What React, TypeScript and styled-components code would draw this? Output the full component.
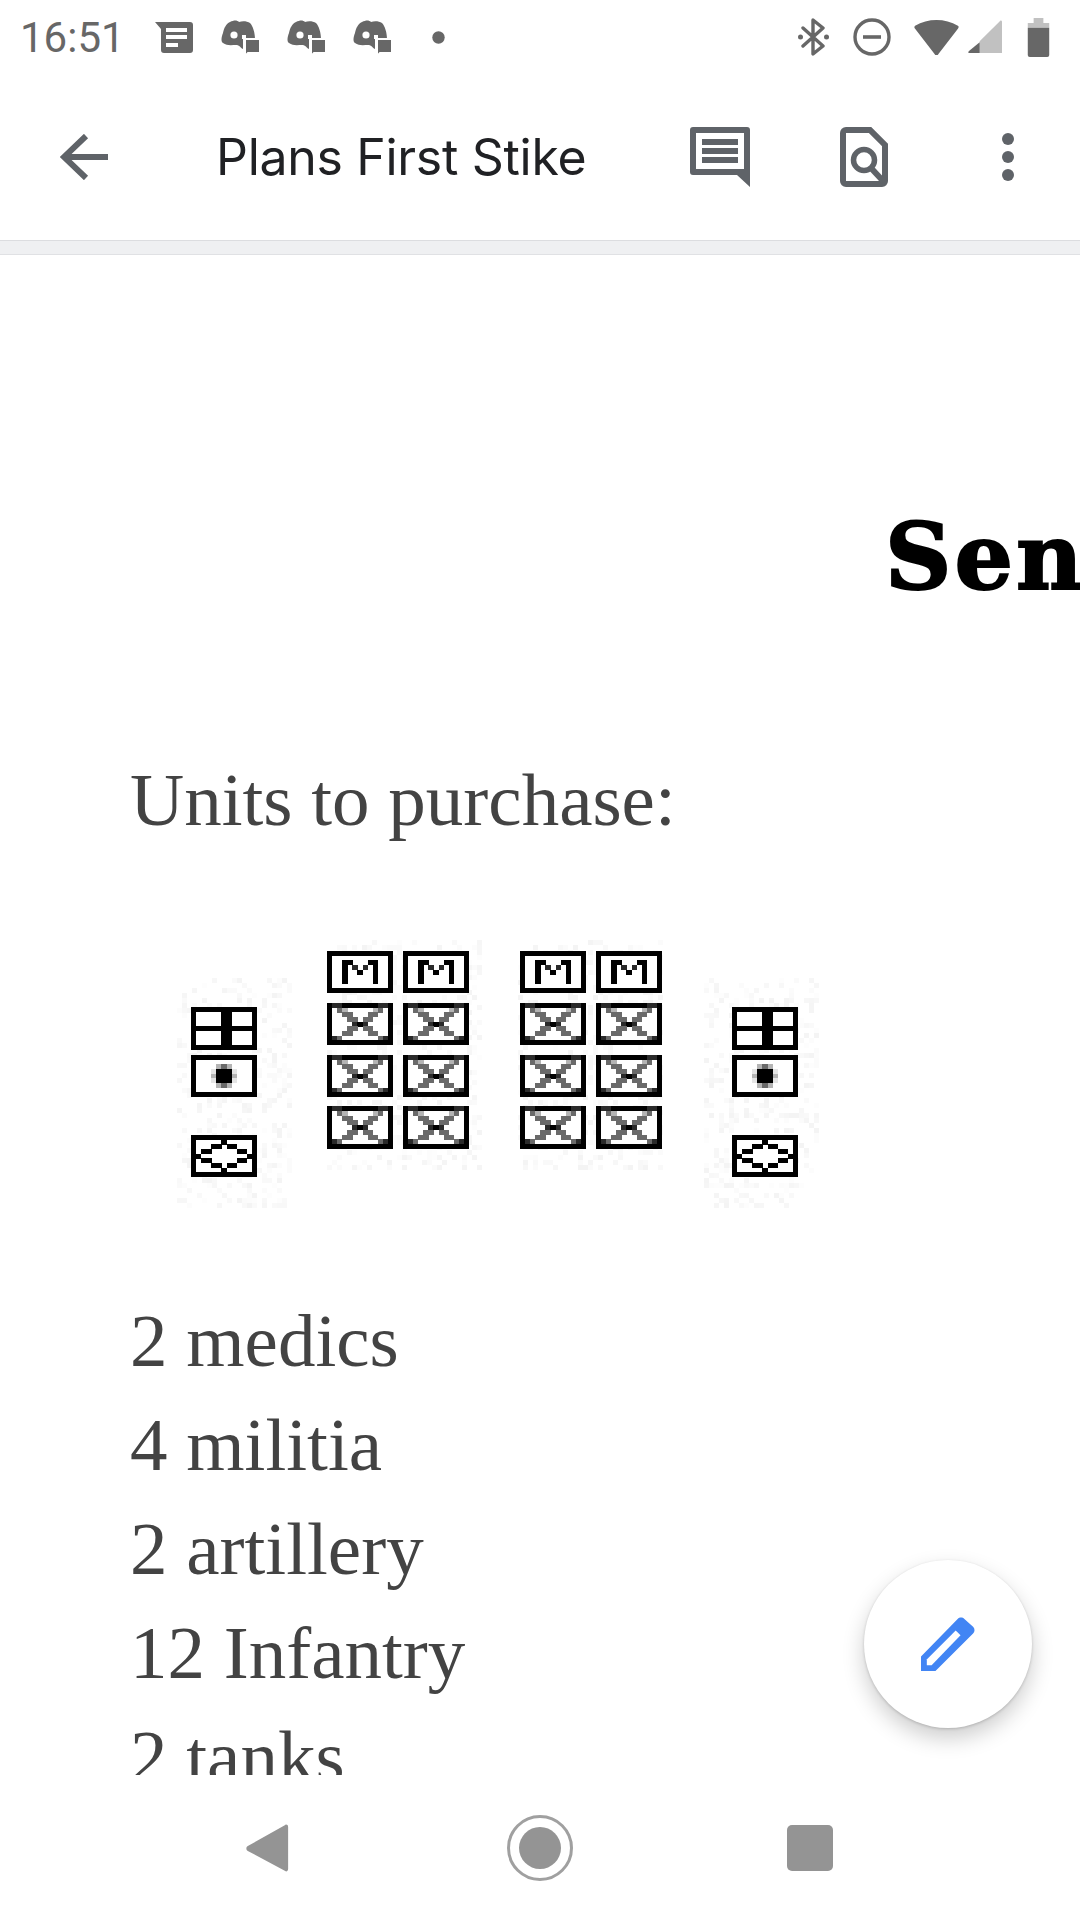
import React from "react";
import styled, { createGlobalStyle } from "styled-components";

const Global = createGlobalStyle`
  html, body { margin: 0; padding: 0; background: #fff; }
  #root { width: 1080px; height: 1920px; }
`;

const Screen = styled.div`
  position: relative;
  width: 1080px;
  height: 1920px;
  overflow: hidden;
  display: flex;
  flex-direction: column;
  background: #fff;
  font-family: "Roboto", sans-serif;
`;

const StatusBar = styled.div`
  height: 74px;
  flex: none;
  display: flex;
  align-items: center;
  justify-content: space-between;
  padding: 0 30px 0 20px;
  color: #676767;
`;

const StatusGroup = styled.div`
  display: flex;
  align-items: center;
`;

const Clock = styled.span`
  font-size: 42px;
  margin-right: 30px;
`;

const Glyph = styled.svg<{ $after?: number }>`
  display: block;
  flex: none;
  margin-right: ${(p) => p.$after ?? 0}px;
`;

const AppBar = styled.div`
  height: 166px;
  flex: none;
  display: flex;
  align-items: center;
  padding: 0 66px 0 60px;
`;

const Title = styled.h1`
  margin: 0 0 0 108px;
  flex: 1;
  font: 400 50px "Inter", "Roboto", sans-serif;
  letter-spacing: -0.3px;
  color: #202124;
`;

const Band = styled.div`
  height: 15px;
  flex: none;
  background: #eff0f2;
  border-top: 1px solid #dcdde0;
  border-bottom: 1px solid #e0e1e4;
  box-sizing: border-box;
`;

const Doc = styled.main`
  height: 1520px;
  flex: none;
  overflow: hidden;
  font-family: "Liberation Serif", serif;
  color: #434343;
`;

const Heading = styled.div`
  padding: 252px 0 0 885px;
  height: 100px;
  white-space: nowrap;
  font: 700 92px/100px "DejaVu Serif", serif;
  letter-spacing: 3px;
  -webkit-text-stroke: 2px #000;
  color: #000;
`;

const Body = styled.p`
  margin: 0;
  padding-left: 130px;
  font-size: 75px;
  line-height: 104px;
  white-space: nowrap;
`;

const SectionTitle = styled(Body)`
  margin-top: 141px;
`;

const Picture = styled.svg`
  display: block;
  margin: 78px 0 69px 160px;
`;

const NavBar = styled.nav`
  flex: 1;
  display: flex;
  align-items: center;
  padding-left: 245px;
`;

const Fab = styled.button`
  position: absolute;
  left: 864px;
  top: 1560px;
  width: 168px;
  height: 168px;
  padding: 0;
  border: 0;
  border-radius: 50%;
  background: #fff;
  display: flex;
  align-items: center;
  justify-content: center;
  box-shadow: 0 10px 22px rgba(0, 0, 0, 0.2), 0 1px 3px rgba(0, 0, 0, 0.18);
`;

const Note = () => (
  <Glyph $after={28} width="38" height="31" viewBox="0 0 38 31">
    <path fill="#676767" d="M0 0h35a3 3 0 0 1 3 3v25a3 3 0 0 1-3 3H9a3 3 0 0 1-3-3V7z" />
    <path fill="#fff" d="M11 6h21v4H11zM11 13h21v4H11zM11 21h12v4H11z" />
  </Glyph>
);

const Discord = ({ after }: { after: number }) => (
  <Glyph $after={after} width="38" height="34" viewBox="0 0 38 34">
    <path fill="#676767" d="M9 2c4-2 7-2 9 0 3-1 8-1 11 1 3 3 5 10 5 16H22v10c-3-1-2-3-6-4-6 0-10 1-14-2C0 22 0 18 2 13 3 8 5 4 9 2z" />
    <circle cx="13" cy="15" r="3.6" fill="#fff" />
    <path fill="#fff" d="M21 15h4v4h-4z" />
    <path fill="#676767" stroke="#fff" strokeWidth="2" d="M24 19h15v14H27l-3 3z" />
  </Glyph>
);

const NOISE_AREAS = [
  [177, 978, 113, 227],
  [327, 940, 151, 228],
  [518, 940, 145, 228],
  [704, 978, 113, 227],
];

function Noise() {
  const out: React.ReactNode[] = [];
  let seed = 12345;
  const next = () => {
    seed = (seed * 1103515245 + 12345) & 0x7fffffff;
    return seed / 0x7fffffff;
  };
  NOISE_AREAS.forEach(([x, y, w, h], a) => {
    for (let px = 0; px < w; px += 5) {
      for (let py = 0; py < h; py += 5) {
        if (next() < 0.3) {
          const shade = 244 + Math.floor(next() * 10);
          out.push(
            <rect key={`${a}-${px}-${py}`} x={x - 160 + px} y={y - 930 + py} width="5" height="5" fill={`rgb(${shade},${shade},${shade})`} />
          );
        }
      }
    }
  });
  return <g>{out}</g>;
}

const SHADES: Record<string, string> = {
  "#": "#000",
  d: "#2a2a2a",
  m: "#6a6a6a",
  l: "#b4b4b4",
  f: "#e4e4e4",
};

const M_SPRITE = [
  "#############",
  "#...........#",
  "#..##...##..#",
  "#..#.d.d.#..#",
  "#..#..#..#..#",
  "#..#.....#..#",
  "#..#.....#..#",
  "#...........#",
  "#############",
];
const X_SPRITE = [
  "#dd#######dd#",
  "#.ml.....lm.#",
  "#..mm...mm..#",
  "#...mm.mm...#",
  "#....d#d....#",
  "#...mm.mm...#",
  "#..mm...mm..#",
  "#dm.......md#",
  "#############",
];
const GRID_SPRITE = [
  "#############",
  "#.....##....#",
  "#.....##....#",
  "#.....##....#",
  "#############",
  "#.....##....#",
  "#.....##....#",
  "#.....##....#",
  "#############",
];
const DOT_SPRITE = [
  "#############",
  "#...........#",
  "#....lml....#",
  "#...f###f...#",
  "#...l###l...#",
  "#...f###f...#",
  "#....lml....#",
  "#...........#",
  "#############",
];
const DIAMOND_SPRITE = [
  "#############",
  "#.....#.....#",
  "#...##.##...#",
  "#.##.....##.#",
  "##.........##",
  "#.##.....##.#",
  "#...##.##...#",
  "#.....#.....#",
  "#############",
];

const Sprite = ({ x, y, h = 42, rows }: { x: number; y: number; h?: number; rows: string[] }) => {
  const pw = 66 / 13;
  const ph = h / 9;
  return (
    <g transform={`translate(${x - 160} ${y - 930})`} shapeRendering="crispEdges">
      <rect width="66" height={h} fill="#fff" />
      {rows.flatMap((row, r) =>
        row.split("").map((c, col) =>
          SHADES[c] ? (
            <rect key={`${r}-${col}`} x={col * pw} y={r * ph} width={pw + 0.2} height={ph + 0.2} fill={SHADES[c]} />
          ) : null
        )
      )}
    </g>
  );
};

const Column = ({ x }: { x: number }) => (
  <g>
    <Sprite x={x} y={1007} h={43} rows={GRID_SPRITE} />
    <Sprite x={x} y={1055} rows={DOT_SPRITE} />
    <Sprite x={x} y={1135} rows={DIAMOND_SPRITE} />
  </g>
);

const Block = ({ x }: { x: number }) => (
  <g>
    {[x, x + 76].map((cx) => (
      <g key={cx}>
        <Sprite x={cx} y={951} rows={M_SPRITE} />
        <Sprite x={cx} y={1003} rows={X_SPRITE} />
        <Sprite x={cx} y={1055} rows={X_SPRITE} />
        <Sprite x={cx} y={1106} h={43} rows={X_SPRITE} />
      </g>
    ))}
  </g>
);

export default function App() {
  return (
    <Screen>
      <Global />
      <StatusBar>
        <StatusGroup>
          <Clock>16:51</Clock>
          <Note />
          <Discord after={28} />
          <Discord after={28} />
          <Discord after={41} />
          <Glyph width="13" height="13" viewBox="0 0 13 13">
            <circle cx="6.5" cy="6.5" r="6.2" fill="#676767" />
          </Glyph>
        </StatusGroup>
        <StatusGroup>
          <Glyph $after={24} width="31" height="38" viewBox="0 0 31 38">
            <path d="M5 10l20 18-10 8V2l10 8L5 28" fill="none" stroke="#676767" strokeWidth="3.4" strokeLinejoin="round" strokeLinecap="round" />
            <circle cx="2.5" cy="19" r="2.5" fill="#676767" />
            <circle cx="28.5" cy="19" r="2.5" fill="#676767" />
          </Glyph>
          <Glyph $after={23} width="38" height="38" viewBox="0 0 38 38">
            <circle cx="19" cy="19" r="17" fill="none" stroke="#676767" strokeWidth="3.4" />
            <path d="M10 19h18" stroke="#676767" strokeWidth="3.6" />
          </Glyph>
          <Glyph $after={9} width="45" height="36" viewBox="0 0 46 37">
            <path fill="#676767" d="M1 7C14-1 32-1 45 7c1 1 1 1 0 3L25 36c-1 2-3 2-4 0L1 10C0 9 0 8 1 7z" />
          </Glyph>
          <Glyph $after={25} width="34" height="34" viewBox="0 0 35 35">
            <path fill="#c1c1c1" d="M12 22L33 1c1-1 2 0 2 1v32H12z" />
            <path fill="#676767" d="M12 23v11H1c-1 0-1-1 0-2z" />
          </Glyph>
          <Glyph width="23" height="39" viewBox="0 0 22 40">
            <path fill="#c1c1c1" d="M6 0h10v5h6v5H0V5h6z" />
            <path fill="#676767" d="M0 10h22v28a2 2 0 0 1-2 2H2a2 2 0 0 1-2-2z" />
          </Glyph>
        </StatusGroup>
      </StatusBar>

      <AppBar>
        <Glyph width="48" height="46" viewBox="0 0 48 46">
          <path d="M48 23H5M26 2L4 23l22 21" fill="none" stroke="#5f6368" strokeWidth="6" />
        </Glyph>
        <Title>Plans First Stike</Title>
        <Glyph $after={90} width="60" height="60" viewBox="0 0 60 60">
          <path d="M3 0h54a3 3 0 0 1 3 3v57L47 48H3a3 3 0 0 1-3-3V3a3 3 0 0 1 3-3z" fill="#5f6368" />
          <path d="M6 6h48v36H6z" fill="#fff" />
          <path d="M12 12h36v6H12zM12 21h36v6H12zM12 30h36v6H12z" fill="#5f6368" />
        </Glyph>
        <Glyph $after={114} width="48" height="60" viewBox="0 0 48 60">
          <path d="M6 3h24l15 15v36a3 3 0 0 1-3 3H6a3 3 0 0 1-3-3V6a3 3 0 0 1 3-3z" fill="none" stroke="#5f6368" strokeWidth="6" />
          <circle cx="24" cy="33" r="10.5" fill="none" stroke="#5f6368" strokeWidth="5.5" />
          <path d="M31 41l13 14" stroke="#5f6368" strokeWidth="6" />
        </Glyph>
        <Glyph width="12" height="48" viewBox="0 0 12 48">
          <circle cx="6" cy="6" r="6" fill="#5f6368" />
          <circle cx="6" cy="24" r="6" fill="#5f6368" />
          <circle cx="6" cy="42" r="6" fill="#5f6368" />
        </Glyph>
      </AppBar>

      <Band />

      <Doc>
        <Heading>Sen</Heading>
        <SectionTitle>Units to purchase:</SectionTitle>
        <Picture width="670" height="290" viewBox="0 0 670 290">
          <Noise />
          <Column x={191} />
          <Block x={327} />
          <Block x={520} />
          <Column x={732} />
        </Picture>
        <Body>2 medics</Body>
        <Body>4 militia</Body>
        <Body>2 artillery</Body>
        <Body>12 Infantry</Body>
        <Body>2 tanks</Body>
      </Doc>

      <NavBar>
        <Glyph $after={218} width="44" height="48" viewBox="0 0 44 50">
          <path d="M41 1c1-1 3 0 3 2v44c0 2-2 3-3 2L2 28c-2-1-2-4 0-5z" fill="#949494" />
        </Glyph>
        <Glyph $after={214} width="66" height="66" viewBox="0 0 66 66">
          <circle cx="33" cy="33" r="31.5" fill="none" stroke="#a0a0a0" strokeWidth="3" />
          <circle cx="33" cy="33" r="21" fill="#949494" />
        </Glyph>
        <Glyph width="46" height="46" viewBox="0 0 46 46">
          <rect width="46" height="46" rx="5" fill="#949494" />
        </Glyph>
      </NavBar>

      <Fab aria-label="Edit">
        <Glyph width="54" height="54" viewBox="0 0 56 56">
          <path d="M0 56V41L38 2c2-2 5-2 7 0l9 8c2 2 2 5 0 7L15 56z" fill="#4285f4" />
          <path d="M6 50v-6L36 14l5 5L11 50z" fill="#fff" />
        </Glyph>
      </Fab>
    </Screen>
  );
}
